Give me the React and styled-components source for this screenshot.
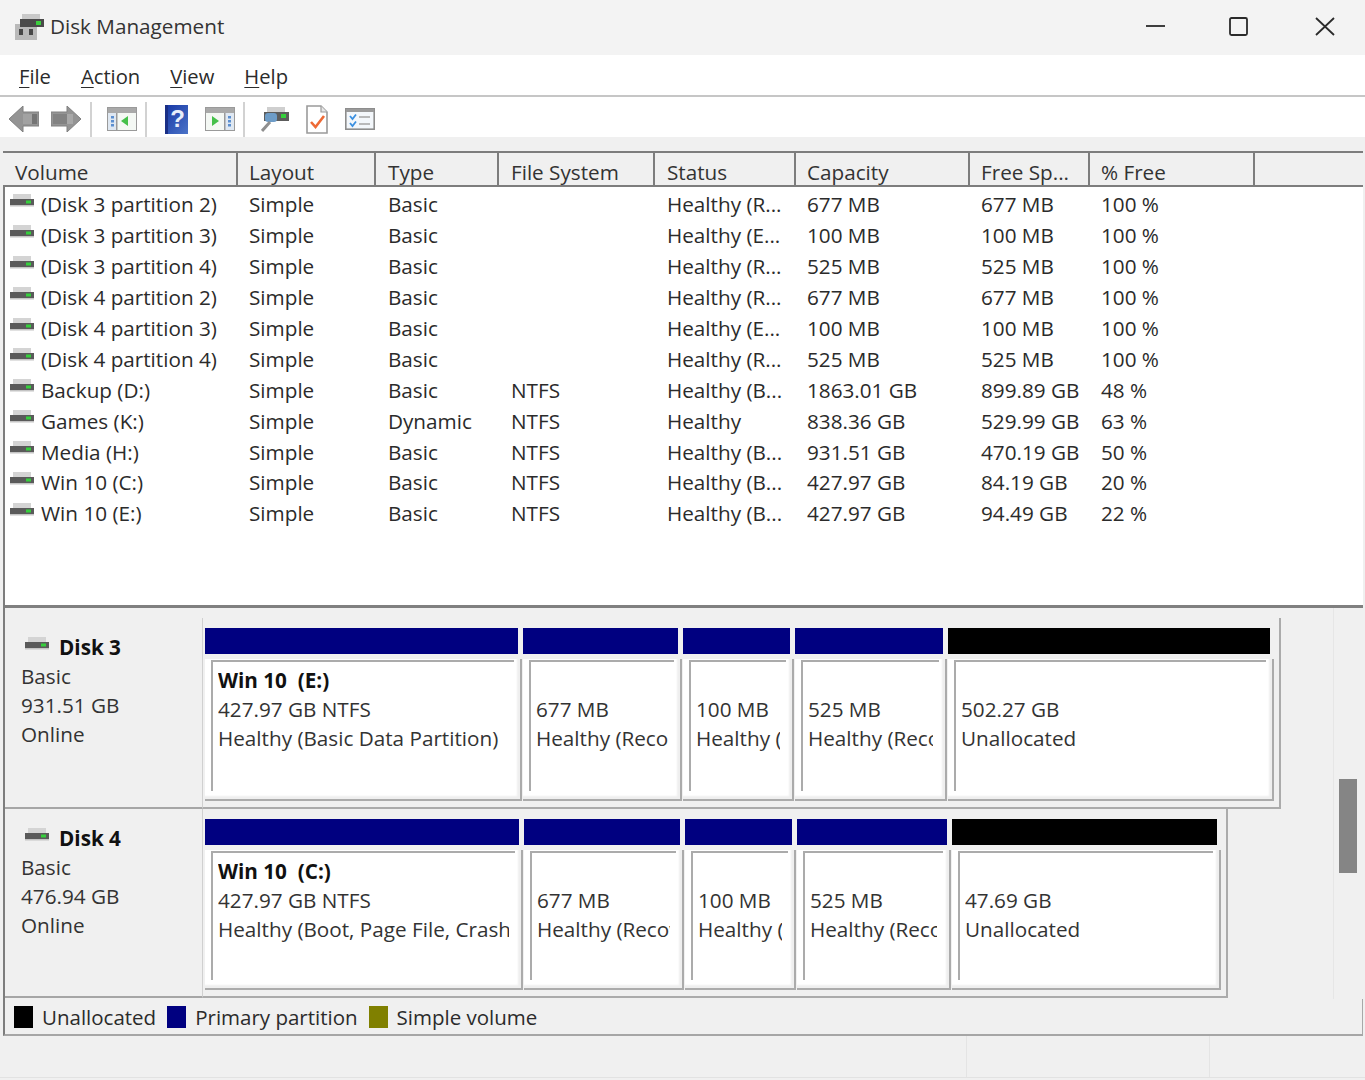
import React from "react";
import styled, { createGlobalStyle } from "styled-components";

const GlobalStyle = createGlobalStyle`
  html, body {
    margin: 0;
    padding: 0;
    background: #f0f0f0;
  }
  body {
    font-family: "Open Sans", "Noto Sans", "Liberation Sans", sans-serif;
    font-size: 20.7px;
    color: #2b2b2b;
    overflow: hidden;
  }
`;

const COLUMNS = "233px 138px 123px 156px 141px 174px 120px 165px 1fr";

const Window = styled.div`
  width: 1365px;
  height: 1080px;
  display: flex;
  flex-direction: column;
  overflow: hidden;
`;

const TitleBar = styled.div`
  height: 55px;
  flex: none;
  display: flex;
  align-items: center;
  padding: 0 0 3px 15px;
  background: #f3f3f3;
  box-sizing: border-box;
`;

const TitleText = styled.div`
  margin-left: 6px;
  color: #333;
`;

const WindowControls = styled.div`
  margin-left: auto;
  display: flex;
  align-items: center;
`;

const ControlIcon = styled.svg`
  width: 84px;
  height: 22px;
  display: block;
  fill: none;
  stroke: #2a2a2a;
  stroke-width: 1.8;
`;

const MenuBar = styled.div`
  height: 42px;
  flex: none;
  box-sizing: border-box;
  display: flex;
  align-items: center;
  gap: 30px;
  padding: 1px 0 0 19px;
  font-size: 20.2px;
  background: #fff;
  border-bottom: 2px solid #c6c6c6;
`;

const MenuItem = styled.span`
  u {
    text-underline-offset: 3px;
    text-decoration-thickness: 1px;
  }
`;

const Toolbar = styled.div`
  height: 40px;
  flex: none;
  box-sizing: border-box;
  padding-top: 4px;
  display: flex;
  align-items: center;
  background: #fff;
`;

const ToolGroup = styled.div`
  height: 35px;
  display: flex;
  align-items: center;
  gap: ${(p) => p.$gap || 0}px;
  padding: 0 ${(p) => p.$right || 0}px 0 ${(p) => p.$left || 0}px;
  border-right: ${(p) => (p.$last ? "none" : "2px solid #d2d2d2")};
`;

const Main = styled.div`
  flex: 1;
  display: flex;
  flex-direction: column;
  padding: 14px 2px 0 3px;
  background: #f0f0f0;
  min-height: 0;
`;

const Pane = styled.div`
  display: flex;
  flex-direction: column;
  border-left: 2px solid #7d7d7d;
`;

const ColumnHeader = styled.div`
  display: grid;
  grid-template-columns: ${COLUMNS};
  height: 36px;
  box-sizing: border-box;
  margin-left: -2px;
  padding-left: 2px;
  border-top: 2px solid #7d7d7d;
  border-bottom: 2px solid #7d7d7d;
  background: #f0f0f0;
`;

const HeaderCell = styled.div`
  display: flex;
  align-items: center;
  padding: 5px 0 0 ${(p) => p.$pad}px;
  color: #333;
  border-right: ${(p) => (p.$plain ? "none" : "2px solid #7d7d7d")};
`;

const VolumeList = styled.div`
  height: 421px;
  box-sizing: border-box;
  padding-top: 2px;
  background: #fff;
  border-bottom: 3px solid #808080;
`;

const VolumeRow = styled.div`
  display: grid;
  grid-template-columns: ${COLUMNS};
  height: 30.9px;
  align-items: center;
  white-space: nowrap;
`;

const VolumeCell = styled.div`
  display: flex;
  align-items: center;
  gap: 7px;
  padding-left: 5px;
`;

const Cell = styled.div`
  padding-left: ${(p) => p.$pad}px;
`;

const DiskArea = styled.div`
  height: 391px;
  flex: none;
  display: flex;
  background: #f0f0f0;
`;

const DiskScroll = styled.div`
  flex: 1;
  display: flex;
  flex-direction: column;
  padding-top: 10px;
`;

const DiskRow = styled.div`
  height: ${(p) => p.$height}px;
  flex: none;
  display: flex;
`;

const DiskLabel = styled.div`
  width: 197px;
  flex: none;
  box-sizing: border-box;
  padding: 15px 0 0 16px;
  line-height: 29px;
  color: #333;
  border-bottom: 2px solid #a6a6a6;
`;

const DiskName = styled.div`
  display: flex;
  align-items: center;
  gap: 10px;
  margin-left: 4px;
  font-weight: 700;
  color: #111;
`;

const PartitionFrame = styled.div`
  display: flex;
  box-sizing: border-box;
  padding: 10px 4px 6px 2px;
  border-left: 1px solid #d0d0d0;
  border-right: 2px solid #ababab;
  border-bottom: 2px solid #ababab;
`;

const Partition = styled.div`
  width: ${(p) => p.$width}px;
  flex: none;
  box-sizing: border-box;
  display: flex;
  flex-direction: column;
  gap: 5px;
  padding-right: 1px;
`;

const PartitionBar = styled.div`
  height: 26px;
  flex: none;
  margin-right: 4px;
  background: ${(p) => p.$color};
`;

const PartitionBody = styled.div`
  flex: 1;
  min-height: 0;
  display: flex;
  background: #fff;
  border-right: 2px solid #ababab;
  border-bottom: 2px solid #ababab;
  box-shadow: inset -3px -3px 2px #efefef;
`;

const PartitionInner = styled.div`
  flex: 1;
  min-width: 0;
  margin: 1px 6px 8px 6px;
  padding: 4px 6px 0 5px;
  border-top: 2px solid #ababab;
  border-left: 2px solid #ababab;
  line-height: 29px;
  color: #333;
`;

const PartitionText = styled.div`
  overflow: hidden;
  white-space: nowrap;
`;

const PartitionName = styled.div`
  min-height: 29px;
  font-weight: 700;
  color: #111;
  white-space: pre;
`;

const ScrollTrack = styled.div`
  width: 30px;
  flex: none;
  border-left: 1px solid #e6e6e6;
  padding: 171px 0 0 5px;
  box-sizing: border-box;
`;

const ScrollThumb = styled.div`
  width: 18px;
  height: 94px;
  background: #858585;
`;

const Legend = styled.div`
  height: 37px;
  flex: none;
  box-sizing: border-box;
  display: flex;
  align-items: center;
  padding-left: 9px;
  font-size: 20.5px;
  border-left: 2px solid #7d7d7d;
  border-right: 1px solid #a8a8a8;
  border-bottom: 2px solid #a6a6a6;
`;

const LegendItem = styled.div`
  display: flex;
  align-items: center;
  gap: 9px;
  margin-right: 11px;
`;

const Swatch = styled.span`
  width: 19px;
  height: 22px;
  background: ${(p) => p.$color};
`;

const StatusBar = styled.div`
  flex: 1;
  display: flex;
  margin: 0 -2px 2px -3px;
  border-bottom: 1px solid #e2e2e2;
`;

const StatusCell = styled.div`
  width: ${(p) => p.$width}px;
  border-right: 1px solid #e4e4e4;
`;

const DriveSvg = styled.svg`
  flex: none;
  display: block;
  margin-bottom: 7px;
`;

const ToolSvg = styled.svg`
  flex: none;
  display: block;
`;

const DriveIcon = () => (
  <DriveSvg width="24" height="14" viewBox="0 0 24 14">
    <rect x="3" y="0" width="18" height="5" fill="#d4d4d4" />
    <rect x="0" y="5" width="24" height="6" fill="#5a5a5a" />
    <rect x="0" y="11" width="24" height="1.5" fill="#c4c4c4" />
    <rect x="16" y="6.5" width="5" height="3" fill="#35d03c" />
  </DriveSvg>
);

const AppIcon = () => (
  <ToolSvg width="29" height="27" viewBox="0 0 29 27">
    <rect x="7" y="1" width="18" height="6" fill="#c9c9c9" />
    <rect x="0" y="11" width="22" height="16" fill="#b9b9b9" />
    <rect x="5" y="6" width="24" height="8" fill="#4a4a4a" />
    <rect x="21" y="8" width="5" height="4" fill="#3ccf3f" />
    <rect x="4" y="16" width="4" height="6" fill="#474747" />
    <rect x="14" y="16" width="4" height="6" fill="#474747" />
  </ToolSvg>
);

const BackIcon = () => (
  <ToolSvg width="30" height="26" viewBox="0 0 30 26">
    <polygon points="0,13 14,0 14,6 30,6 30,20 14,20 14,26" fill="#949494" stroke="#808080" />
    <rect x="14" y="8" width="14" height="10" fill="#a2a2a2" />
    <rect x="23" y="8" width="5" height="10" fill="#757575" />
  </ToolSvg>
);

const ForwardIcon = () => (
  <ToolSvg width="30" height="26" viewBox="0 0 30 26">
    <polygon points="30,13 16,0 16,6 0,6 0,20 16,20 16,26" fill="#949494" stroke="#808080" />
    <rect x="2" y="8" width="14" height="10" fill="#828282" />
    <rect x="16" y="8" width="6" height="10" fill="#a8a8a8" />
  </ToolSvg>
);

const PanelIcon = ({ flip }) => (
  <ToolSvg width="30" height="24" viewBox="0 0 30 24">
    <rect x="0.5" y="0.5" width="29" height="23" fill="#f4f8f4" stroke="#9a9a9a" />
    <rect x="1" y="1" width="28" height="5" fill="#a9a9a9" />
    <rect x={flip ? 20 : 1} y="6" width="9" height="17" fill="#dfe8f2" />
    <rect x={flip ? 19 : 9} y="6" width="1.5" height="17" fill="#9a9a9a" />
    {[9, 13, 17].map((y) => (
      <rect key={y} x={flip ? 23 : 4} y={y} width="3" height="2.5" fill="#5b8fd0" />
    ))}
    <polygon points={flip ? "7,9 7,19 14,14" : "21,9 21,19 14,14"} fill="#45c04a" />
  </ToolSvg>
);

const HelpIcon = () => (
  <ToolSvg width="23" height="29" viewBox="0 0 23 29">
    <defs>
      <linearGradient id="helpBlue" x1="0" y1="0" x2="1" y2="1">
        <stop offset="0" stopColor="#1637a5" />
        <stop offset="1" stopColor="#4c74c8" />
      </linearGradient>
    </defs>
    <rect width="23" height="29" fill="url(#helpBlue)" />
    <rect width="3" height="29" fill="#1a2f86" />
    <text
      x="12.5"
      y="22"
      textAnchor="middle"
      fontSize="24"
      fontWeight="700"
      fontFamily="Liberation Sans, sans-serif"
      fill="#e8eefa"
    >
      ?
    </text>
  </ToolSvg>
);

const DiskSearchIcon = () => (
  <ToolSvg width="28" height="25" viewBox="0 0 28 25">
    <rect x="6" y="0" width="18" height="5" fill="#cfcfcf" />
    <rect x="3" y="5" width="25" height="9" fill="#5c5c5c" />
    <rect x="4" y="6" width="12" height="9" rx="3" fill="#6d9cc7" />
    <rect x="20" y="7" width="5" height="4" fill="#35d03c" />
    <line x1="1" y1="24" x2="9" y2="15" stroke="#8f8f8f" strokeWidth="3" />
  </ToolSvg>
);

const DocCheckIcon = () => (
  <ToolSvg width="22" height="29" viewBox="0 0 22 29">
    <path d="M1 1 H15 L21 7 V28 H1 Z" fill="#fff" stroke="#9b9b9b" strokeWidth="1.6" />
    <path d="M15 1 V7 H21" fill="#e6e6e6" stroke="#9b9b9b" strokeWidth="1.2" />
    <path d="M5 17 L9.5 22 L18 11" fill="none" stroke="#ee6a35" strokeWidth="2.6" />
  </ToolSvg>
);

const ChecklistIcon = () => (
  <ToolSvg width="30" height="22" viewBox="0 0 30 22">
    <rect x="0.8" y="0.8" width="28.4" height="20.4" fill="#f3f7fb" stroke="#8d8d8d" strokeWidth="1.6" />
    <rect x="1" y="1" width="28" height="3" fill="#9a9a9a" />
    <path d="M5 8 L7.5 11 L11 6.5 M5 15 L7.5 18 L11 13.5" fill="none" stroke="#3a8fe0" strokeWidth="1.8" />
    <path d="M14 9 H25 M14 16 H25" stroke="#a5a5a5" strokeWidth="1.6" />
  </ToolSvg>
);

const headers = ["Volume", "Layout", "Type", "File System", "Status", "Capacity", "Free Sp...", "% Free"];
// left padding per column, the middle ones sit a pixel further in
const cellPad = [10, 11, 12, 12, 12, 11, 11, 11];

const volumes = [
  ["(Disk 3 partition 2)", "Simple", "Basic", "", "Healthy (R...", "677 MB", "677 MB", "100 %"],
  ["(Disk 3 partition 3)", "Simple", "Basic", "", "Healthy (E...", "100 MB", "100 MB", "100 %"],
  ["(Disk 3 partition 4)", "Simple", "Basic", "", "Healthy (R...", "525 MB", "525 MB", "100 %"],
  ["(Disk 4 partition 2)", "Simple", "Basic", "", "Healthy (R...", "677 MB", "677 MB", "100 %"],
  ["(Disk 4 partition 3)", "Simple", "Basic", "", "Healthy (E...", "100 MB", "100 MB", "100 %"],
  ["(Disk 4 partition 4)", "Simple", "Basic", "", "Healthy (R...", "525 MB", "525 MB", "100 %"],
  ["Backup (D:)", "Simple", "Basic", "NTFS", "Healthy (B...", "1863.01 GB", "899.89 GB", "48 %"],
  ["Games (K:)", "Simple", "Dynamic", "NTFS", "Healthy", "838.36 GB", "529.99 GB", "63 %"],
  ["Media (H:)", "Simple", "Basic", "NTFS", "Healthy (B...", "931.51 GB", "470.19 GB", "50 %"],
  ["Win 10 (C:)", "Simple", "Basic", "NTFS", "Healthy (B...", "427.97 GB", "84.19 GB", "20 %"],
  ["Win 10 (E:)", "Simple", "Basic", "NTFS", "Healthy (B...", "427.97 GB", "94.49 GB", "22 %"],
];

const NAVY = "#000080";
const BLACK = "#000";

const disks = [
  {
    name: "Disk 3",
    size: "931.51 GB",
    height: 191,
    parts: [
      { width: 318, color: NAVY, name: "Win 10  (E:)", lines: ["427.97 GB NTFS", "Healthy (Basic Data Partition)"] },
      { width: 160, color: NAVY, lines: ["677 MB", "Healthy (Recovery Partition)"] },
      { width: 112, color: NAVY, lines: ["100 MB", "Healthy (EFI System Partition)"] },
      { width: 153, color: NAVY, lines: ["525 MB", "Healthy (Recovery Partition)"] },
      { width: 327, color: BLACK, lines: ["502.27 GB", "Unallocated"] },
    ],
  },
  {
    name: "Disk 4",
    size: "476.94 GB",
    height: 189,
    parts: [
      { width: 319, color: NAVY, name: "Win 10  (C:)", lines: ["427.97 GB NTFS", "Healthy (Boot, Page File, Crash Dump, Basic Data Partition)"] },
      { width: 161, color: NAVY, lines: ["677 MB", "Healthy (Recovery Partition)"] },
      { width: 112, color: NAVY, lines: ["100 MB", "Healthy (EFI System Partition)"] },
      { width: 155, color: NAVY, lines: ["525 MB", "Healthy (Recovery Partition)"] },
      { width: 270, color: BLACK, lines: ["47.69 GB", "Unallocated"] },
    ],
  },
];

const App = () => {
  return (
    <Window>
      <GlobalStyle />
      <TitleBar>
        <AppIcon />
        <TitleText>Disk Management</TitleText>
        <WindowControls>
          <ControlIcon viewBox="0 0 84 22">
            <path d="M33 11 H52" />
          </ControlIcon>
          <ControlIcon viewBox="0 0 84 22">
            <rect x="33" y="3" width="17" height="17" rx="1.5" />
          </ControlIcon>
          <ControlIcon viewBox="0 0 84 22">
            <path d="M35 3 L53 20 M53 3 L35 20" />
          </ControlIcon>
        </WindowControls>
      </TitleBar>

      <MenuBar>
        <MenuItem><u>F</u>ile</MenuItem>
        <MenuItem><u>A</u>ction</MenuItem>
        <MenuItem><u>V</u>iew</MenuItem>
        <MenuItem><u>H</u>elp</MenuItem>
      </MenuBar>

      <Toolbar>
        <ToolGroup $left={9} $gap={12} $right={9}>
          <BackIcon />
          <ForwardIcon />
        </ToolGroup>
        <ToolGroup $left={15} $right={8}>
          <PanelIcon />
        </ToolGroup>
        <ToolGroup $left={18} $gap={17} $right={8}>
          <HelpIcon />
          <PanelIcon flip />
        </ToolGroup>
        <ToolGroup $left={16} $gap={17} $last>
          <DiskSearchIcon />
          <DocCheckIcon />
          <ChecklistIcon />
        </ToolGroup>
      </Toolbar>

      <Main>
        <Pane>
          <ColumnHeader>
            {headers.map((h, i) => (
              <HeaderCell key={h} $pad={cellPad[i]}>{h}</HeaderCell>
            ))}
            <HeaderCell $plain />
          </ColumnHeader>
          <VolumeList>
            {volumes.map((row) => (
              <VolumeRow key={row[0]}>
                <VolumeCell>
                  <DriveIcon />
                  {row[0]}
                </VolumeCell>
                {row.slice(1).map((value, i) => (
                  <Cell key={i} $pad={cellPad[i + 1]}>{value}</Cell>
                ))}
              </VolumeRow>
            ))}
          </VolumeList>
          <DiskArea>
            <DiskScroll>
              {disks.map((disk) => (
                <DiskRow key={disk.name} $height={disk.height}>
                  <DiskLabel>
                    <DiskName>
                      <DriveIcon />
                      {disk.name}
                    </DiskName>
                    <div>Basic</div>
                    <div>{disk.size}</div>
                    <div>Online</div>
                  </DiskLabel>
                  <PartitionFrame>
                    {disk.parts.map((part, i) => (
                      <Partition key={i} $width={part.width}>
                        <PartitionBar $color={part.color} />
                        <PartitionBody>
                          <PartitionInner>
                            <PartitionText>
                              <PartitionName>{part.name}</PartitionName>
                              {part.lines.map((line) => (
                                <div key={line}>{line}</div>
                              ))}
                            </PartitionText>
                          </PartitionInner>
                        </PartitionBody>
                      </Partition>
                    ))}
                  </PartitionFrame>
                </DiskRow>
              ))}
            </DiskScroll>
            <ScrollTrack>
              <ScrollThumb />
            </ScrollTrack>
          </DiskArea>
        </Pane>
        <Legend>
          <LegendItem><Swatch $color="#000" />Unallocated</LegendItem>
          <LegendItem><Swatch $color="#000080" />Primary partition</LegendItem>
          <LegendItem><Swatch $color="#808000" />Simple volume</LegendItem>
        </Legend>
        <StatusBar>
          <StatusCell $width={966} />
          <StatusCell $width={242} />
        </StatusBar>
      </Main>
    </Window>
  );
};

export default App;
